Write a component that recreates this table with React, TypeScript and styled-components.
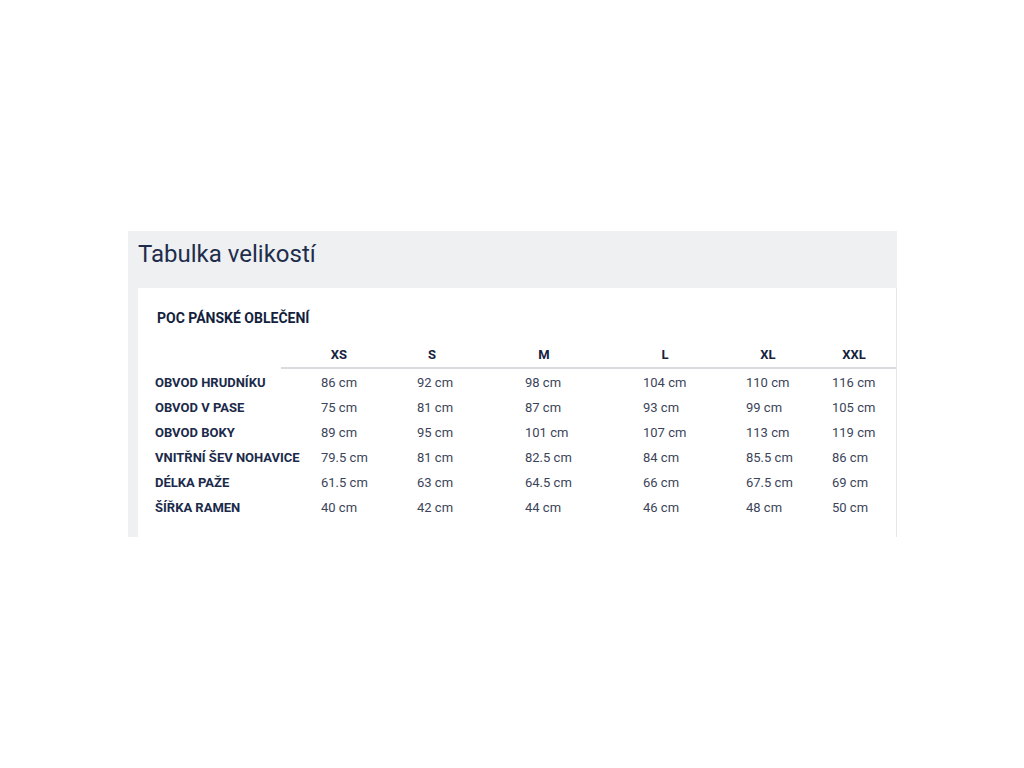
import React from "react"
import styled, { createGlobalStyle } from "styled-components"

// header label nudges, so each size sits over its column of values
const sizes: { name: string; shift: number }[] = [
  { name: "XS", shift: -2 },
  { name: "S", shift: -5 },
  { name: "M", shift: -1 },
  { name: "L", shift: 2 },
  { name: "XL", shift: 2 },
  { name: "XXL", shift: 2 },
]

const rows: { label: string; values: string[] }[] = [
  { label: "OBVOD HRUDNÍKU", values: ["86 cm", "92 cm", "98 cm", "104 cm", "110 cm", "116 cm"] },
  { label: "OBVOD V PASE", values: ["75 cm", "81 cm", "87 cm", "93 cm", "99 cm", "105 cm"] },
  { label: "OBVOD BOKY", values: ["89 cm", "95 cm", "101 cm", "107 cm", "113 cm", "119 cm"] },
  { label: "VNITŘNÍ ŠEV NOHAVICE", values: ["79.5 cm", "81 cm", "82.5 cm", "84 cm", "85.5 cm", "86 cm"] },
  { label: "DÉLKA PAŽE", values: ["61.5 cm", "63 cm", "64.5 cm", "66 cm", "67.5 cm", "69 cm"] },
  { label: "ŠÍŘKA RAMEN", values: ["40 cm", "42 cm", "44 cm", "46 cm", "48 cm", "50 cm"] },
]

const GlobalStyle = createGlobalStyle`
  html, body {
    margin: 0;
    padding: 0;
    background: #ffffff;
    font-family: Roboto, "Liberation Sans", Arial, sans-serif;
  }
`

const Page = styled.div`
  padding: 231px 0 0 128px;
`

const Panel = styled.section`
  width: 769px;
  height: 306px;
  box-sizing: border-box;
  background: #eef0f2;
  padding: 8px 0 0 10px;
  display: flex;
  flex-direction: column;
  overflow: hidden;
`

const Title = styled.h1`
  margin: 0 0 19px 0;
  font-size: 24px;
  line-height: 30px;
  font-weight: 400;
  color: #1e2d4c;
`

const Card = styled.div`
  flex: 1;
  background: #ffffff;
  border-right: 1px solid #e4e6e9;
  padding: 20px 0 17px 17px;
`

const Subtitle = styled.h2`
  margin: 0 0 14px 2px;
  font-size: 14px;
  line-height: 20px;
  font-weight: 700;
  color: #141f3d;
`

const Grid = styled.div`
  display: grid;
  grid-template-columns: 126px 96px 108px 118px 103px 86px 104px;
  grid-template-rows: 27px;
  grid-auto-rows: 25px;
  font-size: 13px;
  line-height: 25px;
`

const Corner = styled.div``

const SizeHead = styled.div<{ $shift: number }>`
  padding-left: ${(p) => 40 + p.$shift}px;
  border-bottom: 2px solid #d9dbde;
  font-weight: 700;
  color: #16223f;

  span {
    display: inline-block;
    width: 40px;
    text-align: center;
  }
`

const RowLabel = styled.div`
  padding-top: 1px;
  font-weight: 700;
  color: #1b2a4a;
  white-space: nowrap;
`

const Value = styled.div`
  padding: 1px 0 0 40px;
  color: #3b4459;
  white-space: nowrap;
`

export default function App() {
  return (
    <Page>
      <GlobalStyle />
      <Panel>
        <Title>Tabulka velikostí</Title>
        <Card>
          <Subtitle>POC PÁNSKÉ OBLEČENÍ</Subtitle>
          <Grid>
            <Corner />
            {sizes.map((s) => (
              <SizeHead key={s.name} $shift={s.shift}>
                <span>{s.name}</span>
              </SizeHead>
            ))}
            {rows.map((row) => (
              <React.Fragment key={row.label}>
                <RowLabel>{row.label}</RowLabel>
                {row.values.map((v, i) => (
                  <Value key={`${row.label}-${i}`}>{v}</Value>
                ))}
              </React.Fragment>
            ))}
          </Grid>
        </Card>
      </Panel>
    </Page>
  )
}
